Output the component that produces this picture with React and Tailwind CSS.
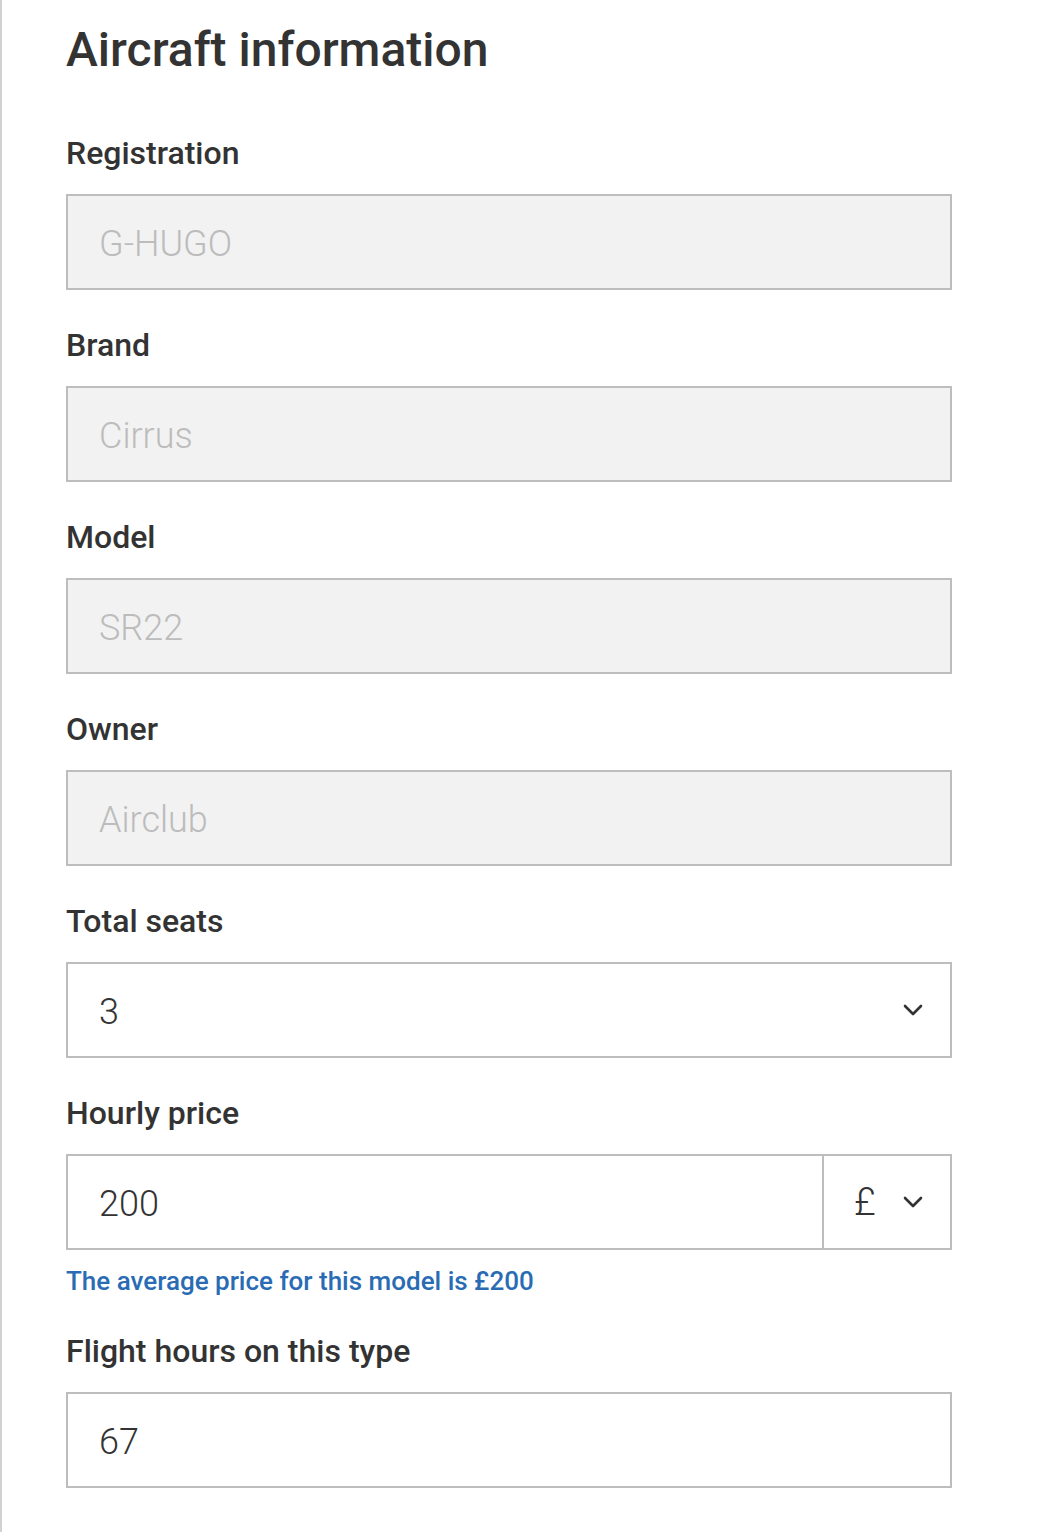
import React from "react";

const Chevron = () => (
  <svg width="20" height="12" viewBox="0 0 20 12" fill="none" className="shrink-0">
    <path d="M2 2 L10 10 L18 2" stroke="#333333" strokeWidth="2.6" strokeLinecap="round" strokeLinejoin="round" />
  </svg>
);

const Label = ({ children }) => (
  <div className="text-[32px] leading-[36px] font-medium text-[#333333] mb-[23px]">{children}</div>
);

const DisabledField = ({ label, value }) => (
  <div className="mt-[37px] first:mt-0">
    <Label>{label}</Label>
    <div className="h-[96px] border-2 border-[#bdbdbd] bg-[#f2f2f2] flex items-center pl-[31px] pt-[3px] text-[36px] font-light text-[#bcbcbc]">
      {value}
    </div>
  </div>
);

export default function App() {
  return (
    <div className="min-h-[1532px] w-[1040px] bg-white border-l-2 border-[#d2d2d2]" style={{ fontFamily: "Roboto, 'Noto Sans', sans-serif" }}>
      <div className="pl-[64px] w-[950px]">
        <h1 className="pt-[22px] text-[48px] leading-[56px] font-medium text-[#333333]">Aircraft information</h1>
        <div className="mt-[57px]">
          <DisabledField label="Registration" value="G-HUGO" />
          <DisabledField label="Brand" value="Cirrus" />
          <DisabledField label="Model" value="SR22" />
          <DisabledField label="Owner" value="Airclub" />
          <div className="mt-[37px]">
            <Label>Total seats</Label>
            <div className="h-[96px] border-2 border-[#bdbdbd] bg-white flex items-center justify-between pl-[31px] pr-[27px] text-[36px] font-light text-[#333333]">
              <span className="pt-[3px]">3</span>
              <Chevron />
            </div>
          </div>
          <div className="mt-[37px]">
            <Label>Hourly price</Label>
            <div className="h-[96px] border-2 border-[#bdbdbd] bg-white flex text-[36px] font-light text-[#333333]">
              <div className="flex-1 flex items-center pl-[31px] pt-[3px]">200</div>
              <div className="w-[128px] border-l-2 border-[#bdbdbd] flex items-center justify-between pl-[30px] pr-[27px]">
                <span className="text-[38px] font-light leading-none">£</span>
                <Chevron />
              </div>
            </div>
            <div className="mt-[15px] text-[26px] leading-[32px] font-medium text-[#2a6cb4]">
              The average price for this model is £200
            </div>
          </div>
          <div className="mt-[36px]">
            <Label>Flight hours on this type</Label>
            <div className="h-[96px] border-2 border-[#bdbdbd] bg-white flex items-center pl-[31px] pt-[3px] text-[36px] font-light text-[#333333]">
              67
            </div>
          </div>
        </div>
      </div>
    </div>
  );
}
